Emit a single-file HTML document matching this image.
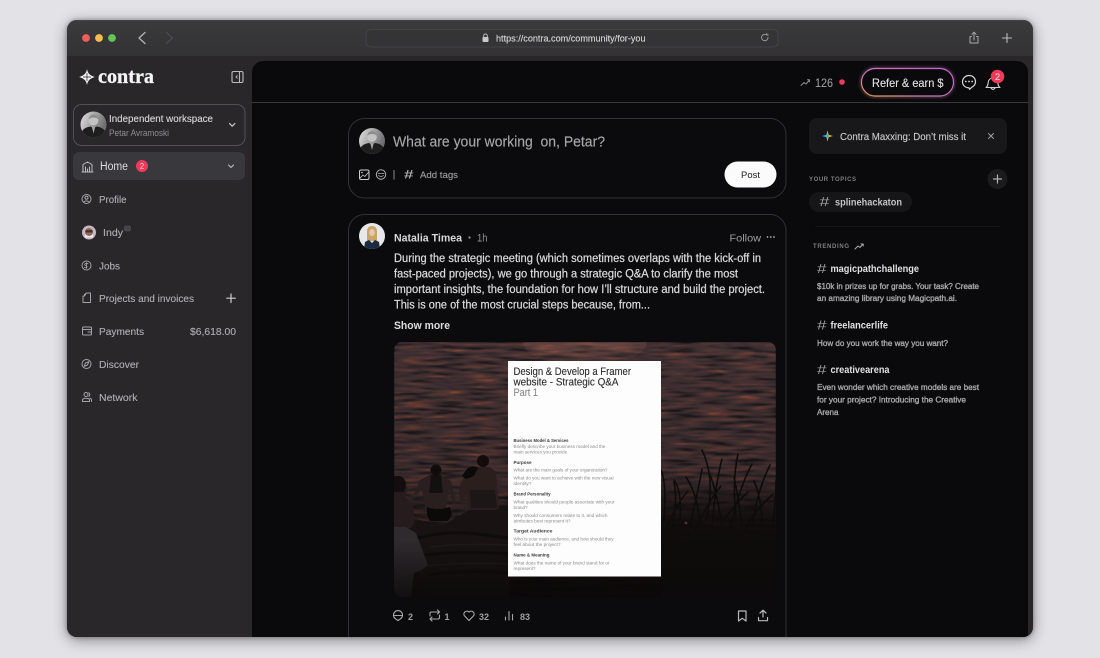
<!DOCTYPE html>
<html lang="en"><head><meta charset="utf-8"><title>Contra community</title>
<style>
html,body{margin:0;padding:0;width:1100px;height:658px;overflow:hidden;background:#e3e2e6}
#win{position:absolute;left:67px;top:20px;width:966px;height:617px;border-radius:10px;background:#29272a;box-shadow:0 3px 14px rgba(0,0,0,.42),0 0 4px rgba(0,0,0,.3)}
svg{position:absolute;left:0;top:0;display:block;filter:blur(.35px)}
text{font-family:"Liberation Sans",sans-serif;font-size:10.5px;white-space:pre}
.i{fill:none;stroke:#a5a3a7;stroke-width:1;stroke-linecap:round;stroke-linejoin:round}
.w{fill:none;stroke:#cfcfcf;stroke-width:1.2;stroke-linecap:round;stroke-linejoin:round}
.nav{fill:#b0aeb2;font-size:10.5px;stroke:#b0aeb2;stroke-width:.12}
.h{fill:#e2e2e2;font-weight:bold;font-size:10px}
.d{fill:#a8a8aa;font-size:8.7px;stroke:#a8a8aa;stroke-width:.35}
.b{fill:#dadada;font-size:11.5px;stroke:#dadada;stroke-width:.22}
.a{fill:#a0a0a3;font-size:9px;font-weight:bold}
.t{fill:#2a2a2a;font-size:11px;stroke:#2a2a2a;stroke-width:.12}
.st{fill:#3a3a3c;font-size:4.4px;font-weight:bold}
.sd{fill:#8b8b90;font-size:4.4px}
</style></head><body>
<div id="win"></div>
<svg width="1100" height="658" viewBox="0 0 1100 658" xmlns="http://www.w3.org/2000/svg">
<defs>
<clipPath id="wc"><rect x="67" y="20" width="966" height="617" rx="10"/></clipPath>
<clipPath id="pc"><rect x="394" y="342" width="382" height="255" rx="8"/></clipPath>
<clipPath id="c1"><circle cx="0" cy="0" r="13"/></clipPath>
<linearGradient id="tb" x1="0" y1="0" x2="0" y2="1"><stop offset="0" stop-color="#3b3a3d"/><stop offset="1" stop-color="#323134"/></linearGradient>
<linearGradient id="pill" x1="0" y1="1" x2="1" y2="0"><stop offset="0" stop-color="#e8a25c"/><stop offset=".35" stop-color="#c77ab0"/><stop offset="1" stop-color="#c964c8"/></linearGradient>
<linearGradient id="dk" x1="0" y1="0" x2="0" y2="1"><stop offset="0" stop-color="#000" stop-opacity="0"/><stop offset=".5" stop-color="#000" stop-opacity=".12"/><stop offset=".72" stop-color="#000" stop-opacity=".4"/><stop offset="1" stop-color="#000" stop-opacity=".85"/></linearGradient>
<linearGradient id="btm" x1="0" y1="0" x2="0" y2="1"><stop offset="0" stop-color="#0a0808" stop-opacity="0"/><stop offset="1" stop-color="#0a0808" stop-opacity=".8"/></linearGradient>
<radialGradient id="gl" cx=".5" cy="0" r="1"><stop offset="0" stop-color="#ff9c78" stop-opacity=".6"/><stop offset=".6" stop-color="#d06c50" stop-opacity=".2"/><stop offset="1" stop-color="#d06c50" stop-opacity="0"/></radialGradient>
<linearGradient id="gr" x1="0" y1="0" x2="0" y2="1"><stop offset="0" stop-color="#0e0b0b" stop-opacity="0"/><stop offset=".35" stop-color="#0e0b0b" stop-opacity=".85"/><stop offset=".55" stop-color="#0e0b0b"/><stop offset="1" stop-color="#0c0a0a"/></linearGradient>
<linearGradient id="pa" x1="0" y1="0" x2="1" y2=".4"><stop offset="0" stop-color="#e4e4e4"/><stop offset="1" stop-color="#6d6d6d"/></linearGradient>
<filter id="water" x="0" y="0" width="100%" height="100%" color-interpolation-filters="sRGB">
<feTurbulence type="fractalNoise" baseFrequency="0.03 0.32" numOctaves="3" seed="7"/>
<feColorMatrix values="1.5 0 0 0 -.25 1.5 0 0 0 -.25 1.5 0 0 0 -.25 0 0 0 0 1"/>
<feComponentTransfer>
<feFuncR type="table" tableValues=".08 .12 .20 .26 .30 .40 .58"/>
<feFuncG type="table" tableValues=".07 .10 .16 .19 .21 .23 .30"/>
<feFuncB type="table" tableValues=".09 .11 .17 .20 .20 .20 .23"/>
</feComponentTransfer>
<feGaussianBlur stdDeviation=".4"/>
</filter>
<filter id="glow" x="-20%" y="-50%" width="140%" height="200%" color-interpolation-filters="sRGB"><feGaussianBlur stdDeviation="1.5"/></filter>
<g id="av1" clip-path="url(#c1)">
<rect x="-13" y="-13" width="26" height="26" fill="url(#pa)"/>
<circle cx="0" cy="-4" r="4.800" fill="#c4c4c4"/>
<path d="M-4.800 -5q1-5 5-5t4.800 5q-2-2-5-2t-4.800 2z" fill="#8d8d8d"/>
<path d="M-11 13V6q3-3.500 8-4l3 2 3-2q6 .5 9 5v6z" fill="#1e1e1e"/>
<path d="M-1.500 3l1.500 6 1.500-6z" fill="#a8a8a8"/>
</g>
</defs>

<g clip-path="url(#wc)">
<rect x="67" y="20" width="966" height="36" fill="url(#tb)"/>
<rect x="67" y="20" width="966" height="1" fill="#454447"/>
<rect x="67" y="56" width="966" height="581" fill="#29272a"/>
<rect x="252" y="61" width="776" height="590" rx="11" fill="#0a090b"/>
<rect x="252" y="102" width="776" height="1" fill="#38373a"/>
</g>

<!-- traffic / toolbar -->
<circle cx="86" cy="38" r="3.9" fill="#ed5f5a"/><circle cx="99" cy="38" r="3.9" fill="#f5bd4f"/><circle cx="112" cy="38" r="3.9" fill="#62c554"/>
<path class="w" style="stroke:#b4b4b4;stroke-width:1.300" d="M145 32.500l-6 5.500 6 5.500"/>
<path class="w" style="stroke:#4b4a4d;stroke-width:1.300" d="M166.500 32.500l6 5.500-6 5.500"/>
<rect x="366" y="29.500" width="412" height="17.500" rx="5" fill="#343336" stroke="#434245"/>
<rect x="482.500" y="37" width="6" height="5" rx="1" fill="#c8c8c8"/><path d="M483.700 37v-1.300a1.800 1.800 0 0 1 3.600 0V37" fill="none" stroke="#c8c8c8" stroke-width=".9"/>
<text x="496" y="41.500" textLength="149.500" lengthAdjust="spacingAndGlyphs" fill="#d4d4d4" stroke="#d4d4d4" stroke-width=".15" style="font-size:9.5px">https://contra.com/community/for-you</text>
<path class="i" style="stroke:#a0a0a0;stroke-width:.9" d="M768 37.500a3.200 3.200 0 1 1-1.200-2.500M766.800 33.500v1.500h1.500"/>
<path class="w" style="stroke:#a8a8a8;stroke-width:1" d="M971.500 36.500h-1.500v6.500h8v-6.500h-1.500M974 40v-7.500M972 34.200l2-2 2 2"/>
<path class="w" style="stroke:#bcbcbc;stroke-width:1.100" d="M1007 33.500v9M1002.500 38h9"/>

<!-- sidebar -->
<path fill="#f2f2f2" d="M87 69c.8 4 2 6 7.800 8-5.800 2-7 4-7.800 8-.8-4-2-6-7.800-8 5.800-2 7-4 7.800-8z"/>
<path fill="#f2f2f2" d="M87 72.500l4 4.500-4 4.500-4-4.500z"/>
<path fill="none" stroke="#29272a" stroke-width=".7" d="M87 73v8M83 77h8"/>
<text x="98" y="83" textLength="56" lengthAdjust="spacingAndGlyphs" fill="#f4f4f4" stroke="#f4f4f4" stroke-width=".3" style="font-family:'Liberation Serif',serif;font-size:21px;font-weight:bold">contra</text>
<rect x="232" y="71.500" width="11" height="11" rx="1.500" fill="none" stroke="#bdbdbd" stroke-width="1.100"/><path d="M239.500 71.500v11" stroke="#bdbdbd" stroke-width="1.100"/><path d="M237.500 75.500l-1.500 1.500 1.500 1.500" fill="none" stroke="#bdbdbd" stroke-width=".9"/>

<rect x="73.500" y="104.500" width="171.500" height="41" rx="8" fill="#29272a" stroke="#525055"/>
<use href="#av1" transform="translate(93.500 124.500)"/>
<text x="109" y="122" textLength="104" lengthAdjust="spacingAndGlyphs" fill="#d8d8d8" stroke="#d8d8d8" stroke-width=".12" style="font-size:10.5px">Independent workspace</text>
<text x="109" y="136" textLength="60" lengthAdjust="spacingAndGlyphs" fill="#8f8d90" style="font-size:9px">Petar Avramoski</text>
<path class="w" d="M229.500 123.500l2.700 2.700 2.700-2.700"/>

<rect x="73" y="152" width="172" height="28" rx="6" fill="#39383c"/>
<path class="i" style="stroke:#bdbdbd" d="M83 172v-7.500l4.500-2.500 4.500 2.500v7.500zM85.500 172v-5M89.500 172v-5M87.500 172v-3M82 172h11"/>
<text x="100" y="170" textLength="28" lengthAdjust="spacingAndGlyphs" fill="#dcdcdc" style="font-size:11.5px">Home</text>
<circle cx="142" cy="166" r="6" fill="#ee3a5b"/><text x="142" y="168.800" text-anchor="middle" fill="#ffc9d2" style="font-size:8px">2</text>
<path class="w" style="stroke:#b8b8b8" d="M228.500 165l2.500 2.500 2.500-2.500"/>

<circle cx="86.500" cy="199" r="4.500" class="i"/><circle cx="86.500" cy="197.700" r="1.500" class="i"/><path class="i" d="M83.500 202.300q3-2.800 6 0"/>
<text class="nav" x="99" y="203" textLength="27.500" lengthAdjust="spacingAndGlyphs">Profile</text>

<circle cx="89" cy="232.500" r="7" fill="#c9b7c4"/><circle cx="89" cy="232" r="4" fill="#8c6a58"/><path d="M85 234q4 4 8 0v3.500h-8z" fill="#eeeeee"/><rect x="85.500" y="230.200" width="7" height="2.200" fill="#3e3230"/>
<text class="nav" x="103" y="236" textLength="20" lengthAdjust="spacingAndGlyphs">Indy</text>
<rect x="124.500" y="226" width="6" height="5" rx="1" fill="#444346" stroke="#5a595c" stroke-width=".5"/>

<circle cx="86.500" cy="265.500" r="4.500" class="i"/><path class="i" style="stroke-width:.8" d="M88 263.800q-1.500-1-2.800 0t.6 1.700 1 1.800-2.300 0M86.500 262.500v6"/>
<text class="nav" x="99" y="269.500" textLength="21" lengthAdjust="spacingAndGlyphs">Jobs</text>

<path class="i" d="M84.500 294.500v1.500h-1.500v6.500h7.500v-9.500h-4z M84.500 296l1.500-2.500"/>
<text class="nav" x="99" y="302" textLength="95" lengthAdjust="spacingAndGlyphs">Projects and invoices</text>
<path class="w" style="stroke:#cfcfcf" d="M231 294v8.500M226.800 298.200h8.500"/>

<rect x="82.500" y="327" width="9" height="8" rx="1" class="i"/><path class="i" d="M82.500 329.500h9M88 332h3.500"/>
<text class="nav" x="99" y="335" textLength="45" lengthAdjust="spacingAndGlyphs">Payments</text>
<text class="nav" x="190" y="335" textLength="46" lengthAdjust="spacingAndGlyphs">$6,618.00</text>

<circle cx="86.500" cy="364" r="4.500" class="i"/><path class="i" d="M88.800 361.700l-1.300 3.300-3.300 1.300 1.300-3.300z"/>
<text class="nav" x="99" y="368" textLength="40" lengthAdjust="spacingAndGlyphs">Discover</text>

<circle cx="86" cy="394.500" r="2" class="i"/><path class="i" d="M82.500 401.500v-1.300q0-2 3.500-2t3.500 2v1.300zM88.800 392.800a2 2 0 0 1 0 3.500M91.500 401.500v-1.300q0-1.500-1.500-2"/>
<text class="nav" x="99" y="401" textLength="38.500" lengthAdjust="spacingAndGlyphs">Network</text>

<!-- topbar -->
<path class="i" style="stroke:#8f8f8f" d="M801 85.500l3-3 2 1.500 3.500-4M807.500 79.700h2v2"/>
<text x="815" y="87" textLength="18" lengthAdjust="spacingAndGlyphs" fill="#a4a4a4" style="font-size:12px">126</text>
<circle cx="842" cy="82" r="2.800" fill="#ee3a5b"/>
<rect x="861.500" y="68.500" width="92" height="27.500" rx="13.700" fill="none" stroke="url(#pill)" stroke-width="2.500" filter="url(#glow)" opacity=".5"/>
<rect x="861.500" y="68.500" width="92" height="27.500" rx="13.700" fill="#0a090b" stroke="url(#pill)" stroke-width="1.200"/>
<text x="872" y="87" textLength="71.500" lengthAdjust="spacingAndGlyphs" fill="#e4e4e4" stroke="#e4e4e4" stroke-width=".12" style="font-size:12px">Refer &amp; earn $</text>
<path class="w" style="stroke:#d8d8d8" d="M969 87.800c-4 0-6.500-2.800-6.500-6s2.700-6.300 6.500-6.300 6.500 2.700 6.500 6.300c0 2.600-1.700 4.400-3.500 5.300l-2.500 2.200z"/>
<circle cx="965.800" cy="81.500" r=".9" fill="#d8d8d8"/><circle cx="969" cy="81.500" r=".9" fill="#d8d8d8"/><circle cx="972.200" cy="81.500" r=".9" fill="#d8d8d8"/>
<path class="w" style="stroke:#d0d0d0;stroke-width:1.100" d="M986 87.500c1.800-1.500 2-2.800 2.200-5 .3-3 2.300-4.500 4.800-4.500s4.500 1.500 4.800 4.500c.2 2.200.4 3.500 2.200 5zM991 88q2 2.800 4 0"/>
<circle cx="997.500" cy="76.500" r="6.800" fill="#ee3a5b"/><text x="997.500" y="79.800" text-anchor="middle" fill="#ffd7de" style="font-size:9.5px">2</text>

<!-- compose -->
<rect x="348.500" y="118.500" width="437.500" height="79.500" rx="16" fill="#0b0a0d" stroke="#323135"/>
<use href="#av1" transform="translate(372 141)"/>
<text x="393" y="146.500" textLength="212" lengthAdjust="spacingAndGlyphs" fill="#a7a7aa" stroke="#a7a7aa" stroke-width=".15" style="font-size:14.5px">What are your working  on, Petar?</text>
<rect x="359.500" y="170" width="9.500" height="9.500" rx="1.500" class="w" style="stroke-width:1"/><path class="w" style="stroke-width:.8" d="M360 178l3-3 1.800 1.500 3.500-4"/><circle cx="362" cy="172.500" r=".8" fill="#cfcfcf"/>
<circle cx="381" cy="174.500" r="4.700" class="i" style="stroke:#b0b0b0"/><path class="i" style="stroke:#b0b0b0;stroke-width:.8" d="M378 173.500h6M378.500 175.500q2.500 2 5 0"/>
<path d="M394 170v9.500" stroke="#8a8a8a"/>
<text x="404" y="178.500" textLength="9.500" lengthAdjust="spacingAndGlyphs" fill="#a8a8a8" style="font-size:12px;font-weight:bold">#</text>
<text x="420" y="178" textLength="38" lengthAdjust="spacingAndGlyphs" fill="#9a9a9a" stroke="#9a9a9a" stroke-width=".15" style="font-size:9.5px">Add tags</text>
<rect x="724.500" y="161.500" width="52" height="26" rx="13" fill="#fbfbfb"/>
<text x="741" y="178" textLength="19" lengthAdjust="spacingAndGlyphs" fill="#222" style="font-size:9.5px">Post</text>

<!-- post card -->
<g clip-path="url(#wc)"><rect x="348.500" y="214.500" width="437.500" height="470" rx="16" fill="#0b0a0d" stroke="#323135"/></g>
<g transform="translate(372 236)"><g clip-path="url(#c1)">
<rect x="-13" y="-13" width="26" height="26" fill="#e8e8ea"/>
<path d="M-5 5V-4q0-6 5-6t5 6V5z" fill="#c9a468"/>
<ellipse cx="0" cy="-3.500" rx="2.800" ry="3.500" fill="#e8c7ac"/>
<path d="M-8 13l1-7 4-2 3 3 3-3 4 2 1 7z" fill="#1b2a40"/>
</g></g>
<text x="394" y="241.500" textLength="68" lengthAdjust="spacingAndGlyphs" fill="#d8d8d8" style="font-size:11px;font-weight:bold">Natalia Timea</text>
<circle cx="469.500" cy="237.500" r="1.100" fill="#999"/>
<text x="477" y="241.500" textLength="10.500" lengthAdjust="spacingAndGlyphs" fill="#949494" style="font-size:11px">1h</text>
<text x="729.500" y="241.500" textLength="31.500" lengthAdjust="spacingAndGlyphs" fill="#9f9f9f" style="font-size:10.5px">Follow</text>
<circle cx="767.500" cy="237" r=".9" fill="#b0b0b0"/><circle cx="770.800" cy="237" r=".9" fill="#b0b0b0"/><circle cx="774" cy="237" r=".9" fill="#b0b0b0"/>
<text class="b" x="394" y="262" textLength="367" lengthAdjust="spacingAndGlyphs">During the strategic meeting (which sometimes overlaps with the kick-off in</text>
<text class="b" x="394" y="277.500" textLength="344" lengthAdjust="spacingAndGlyphs">fast-paced projects), we go through a strategic Q&amp;A to clarify the most</text>
<text class="b" x="394" y="293" textLength="371" lengthAdjust="spacingAndGlyphs">important insights, the foundation for how I’ll structure and build the project.</text>
<text class="b" x="394" y="308.500" textLength="256" lengthAdjust="spacingAndGlyphs">This is one of the most crucial steps because, from...</text>
<text x="394" y="329" textLength="56" lengthAdjust="spacingAndGlyphs" fill="#dedede" style="font-size:11px;font-weight:bold">Show more</text>

<!-- photo -->
<g clip-path="url(#pc)">
<rect x="394" y="342" width="382" height="255" fill="#3b3033" filter="url(#water)"/>
<rect x="394" y="342" width="382" height="255" fill="url(#dk)"/>
<ellipse cx="585" cy="342" rx="62" ry="24" fill="url(#gl)" style="mix-blend-mode:screen"/>
<!-- rocks -->
<path d="M394 525l20-6 30 6 30-18 35-2v92H394z" fill="#181312"/>
<path d="M418 538q30-8 60-4t32 4M420 556q35-6 90-2M428 575q40-6 82-2" fill="none" stroke="#0f0c0c" stroke-width="3"/>
<path d="M430 547q30-4 78-2M425 566q40-4 84-2" fill="none" stroke="#211a19" stroke-width="1.500"/>
<!-- woman -->
<path d="M431 473h10l2 4 8 4 5 22-3 1-4-16-2 15-2 9-18 0-3-10-2-14-5 7-3-1 6-14 8-4z" fill="#2a1f1f"/>
<path d="M427 507q10 4 23 0l2 8-4 6h-18l-3-6z" fill="#0c0909"/>
<path d="M431 475h10l2 18h-14z" fill="#151010"/>
<circle cx="436" cy="470" r="5.500" fill="#110c0c"/>
<!-- man -->
<path d="M476 467h14l6 5 3 36-4 2-26 0-3-16-3 8-3-1-1-14 8-15z" fill="#2b1f1e"/>
<path d="M466 470q6-6 12-2l-4 8-8 3-4-3z" fill="#0c0909"/>
<path d="M470 490h25l2 18h-26z" fill="#1d1617"/>
<circle cx="483" cy="461" r="6" fill="#120d0c"/>
<!-- left person -->
<path d="M394 480h6q7 1 7 10l-2 7 8 7 2 18-4 6h-17z" fill="#261b1d"/>
<path d="M394 476h6q6 2 6 10l-2 6h-10z" fill="#120e0f"/>
<!-- shirt person -->
<path d="M394 527l12 0 10 6 12 32-10 8-4 24h-20z" fill="#2e2a2e"/>
<path d="M414 573l5-2 10 26h-18z" fill="#151010"/>
<rect x="394" y="540" width="382" height="57" fill="url(#btm)"/>
<!-- grass -->
<rect x="661" y="480" width="115" height="117" fill="url(#gr)"/>
<g fill="none" stroke="#0e0c0b" stroke-width="1.600" stroke-linecap="round">
<path d="M664 520q3-40-4-52M672 530q6-30 2-48M680 520q2-30-6-40M690 525q8-34 12-56M700 525q-2-30-14-48M712 525q4-44 10-66M722 525q-6-36-12-50M730 530q8-40 22-66M742 525q-4-30-8-48M752 525q6-36 18-60M762 525q0-26-8-44M772 530q4-30 4-50M706 520q10-40-4-70M736 520q-4-40 2-66M668 525q8-20 20-34M695 530q14-30 26-44M718 530q14-24 30-38M745 530q10-20 28-36"/>
</g>
<circle cx="686" cy="523" r="1.300" fill="#6a2f2a"/>
</g>
<!-- document -->
<rect x="508" y="361" width="153" height="215.500" fill="#fdfdfd"/>
<text class="t" x="513.500" y="375" textLength="117.500" lengthAdjust="spacingAndGlyphs">Design &amp; Develop a Framer</text>
<text class="t" x="513.500" y="385.500" textLength="105" lengthAdjust="spacingAndGlyphs">website - Strategic Q&amp;A</text>
<text class="t" x="513.500" y="396" textLength="24.500" lengthAdjust="spacingAndGlyphs" style="fill:#8b8b8b;stroke:#8b8b8b">Part 1</text>
<text class="st" x="513.500" y="442" textLength="55" lengthAdjust="spacingAndGlyphs">Business Model &amp; Services</text>
<text class="sd" x="513.500" y="447.800" textLength="92" lengthAdjust="spacingAndGlyphs">Briefly describe your business model and the</text>
<text class="sd" x="513.500" y="453.300" textLength="55" lengthAdjust="spacingAndGlyphs">main services you provide.</text>
<text class="st" x="513.500" y="464" textLength="18" lengthAdjust="spacingAndGlyphs">Purpose</text>
<text class="sd" x="513.500" y="471.700" textLength="94" lengthAdjust="spacingAndGlyphs">What are the main goals of your organization?</text>
<text class="sd" x="513.500" y="479.700" textLength="100" lengthAdjust="spacingAndGlyphs">What do you want to achieve with the new visual</text>
<text class="sd" x="513.500" y="485.200" textLength="18" lengthAdjust="spacingAndGlyphs">identity?</text>
<text class="st" x="513.500" y="495.300" textLength="37" lengthAdjust="spacingAndGlyphs">Brand Personality</text>
<text class="sd" x="513.500" y="503.300" textLength="101" lengthAdjust="spacingAndGlyphs">What qualities should people associate with your</text>
<text class="sd" x="513.500" y="508.800" textLength="14" lengthAdjust="spacingAndGlyphs">brand?</text>
<text class="sd" x="513.500" y="517" textLength="94" lengthAdjust="spacingAndGlyphs">Why should consumers relate to it, and which</text>
<text class="sd" x="513.500" y="522.500" textLength="57" lengthAdjust="spacingAndGlyphs">attributes best represent it?</text>
<text class="st" x="513.500" y="532.500" textLength="39" lengthAdjust="spacingAndGlyphs">Target Audience</text>
<text class="sd" x="513.500" y="540.500" textLength="100" lengthAdjust="spacingAndGlyphs">Who is your main audience, and how should they</text>
<text class="sd" x="513.500" y="546" textLength="47" lengthAdjust="spacingAndGlyphs">feel about the project?</text>
<text class="st" x="513.500" y="556.500" textLength="36" lengthAdjust="spacingAndGlyphs">Name &amp; Meaning</text>
<text class="sd" x="513.500" y="564.500" textLength="96" lengthAdjust="spacingAndGlyphs">What does the name of your brand stand for or</text>
<text class="sd" x="513.500" y="570" textLength="22" lengthAdjust="spacingAndGlyphs">represent?</text>

<!-- actions -->
<path class="i" style="stroke:#a8a8a8;stroke-width:1.100" d="M398 620.500l-2.500-1.700a4.500 4.500 0 1 1 5 0zM394.200 615.500h7.600"/>
<text class="a" x="408" y="620" textLength="5">2</text>
<path class="i" style="stroke:#a8a8a8;stroke-width:1.100" d="M430 616v-2.500q0-1.500 1.500-1.500h7.500M437.500 610l2 2-2 2M439.500 615v2.500q0 1.500-1.500 1.500h-7.500M432 617l-2 2 2 2"/>
<text class="a" x="444.500" y="620" textLength="3">1</text>
<path class="i" style="stroke:#a8a8a8;stroke-width:1.100" d="M469 620.500l-4.600-4.700a3 3 0 0 1 4.600-3.800 3 3 0 0 1 4.600 3.800z"/>
<text class="a" x="479" y="620" textLength="10" lengthAdjust="spacingAndGlyphs">32</text>
<path class="i" style="stroke:#a8a8a8;stroke-width:1.100" d="M505.500 620v-3M509 620v-8.500M512.500 620v-5.500"/>
<text class="a" x="520" y="620" textLength="10" lengthAdjust="spacingAndGlyphs">83</text>
<path class="i" style="stroke:#b8b8b8;stroke-width:1.200" d="M738.500 611h7.500v10l-3.700-2.700-3.800 2.700z"/>
<path class="i" style="stroke:#b8b8b8;stroke-width:1.200" d="M763 617v-6.500M760 613l3-2.800 3 2.800M758.500 617.500v3.200h9v-3.200"/>

<!-- right rail -->
<rect x="809" y="118" width="198" height="36" rx="8" fill="#18171a"/>
<path d="M827.500 130.500l1.200 4.300 4.300 1.200-4.300 1.200-1.200 4.300z" fill="#e6b54a"/><path d="M827.500 130.500l-1.200 4.300-4.300 1.200 4.300 1.200 1.200 4.300z" fill="#3fa5d8"/><circle cx="827.500" cy="136" r="1.400" fill="#4bbd7a"/>
<text x="840" y="140" textLength="126" lengthAdjust="spacingAndGlyphs" fill="#c8c8c8" stroke="#c8c8c8" stroke-width=".15" style="font-size:10.5px">Contra Maxxing: Don’t miss it</text>
<path class="i" style="stroke:#a0a0a0" d="M988.500 133.500l5 5M993.500 133.500l-5 5"/>
<text x="809" y="181" textLength="47" fill="#7f7f7f" style="font-size:6px;font-weight:bold">YOUR TOPICS</text>
<circle cx="997.500" cy="179" r="10" fill="#1b1a1d"/><path class="w" style="stroke:#b0b0b0" d="M997.500 175v8M993.500 179h8"/>
<rect x="809" y="192" width="103" height="20" rx="10" fill="#161518"/>
<text x="819.500" y="206" textLength="10" lengthAdjust="spacingAndGlyphs" fill="#a0a0a0" style="font-size:13px">#</text>
<text class="h" x="835" y="205.500" textLength="67" lengthAdjust="spacingAndGlyphs" style="fill:#c4c4c4">splinehackaton</text>
<rect x="815" y="226" width="185" height="1" fill="#151417"/>
<text x="813" y="248" textLength="36" fill="#7f7f7f" style="font-size:6px;font-weight:bold">TRENDING</text>
<path class="i" style="stroke:#aaa" d="M855 249l3-3 2 1.500 3-3.500M861 244h2.200v2"/>

<text x="817" y="273" textLength="9.500" lengthAdjust="spacingAndGlyphs" fill="#a0a0a0" style="font-size:13px">#</text>
<text class="h" x="830.500" y="272" textLength="88.500" lengthAdjust="spacingAndGlyphs">magicpathchallenge</text>
<text class="d" x="817" y="289" textLength="162" lengthAdjust="spacingAndGlyphs">$10k in prizes up for grabs. Your task? Create</text>
<text class="d" x="817" y="301" textLength="140" lengthAdjust="spacingAndGlyphs">an amazing library using Magicpath.ai.</text>
<text x="817" y="329.500" textLength="9.500" lengthAdjust="spacingAndGlyphs" fill="#a0a0a0" style="font-size:13px">#</text>
<text class="h" x="830.500" y="328.500" textLength="57.500" lengthAdjust="spacingAndGlyphs">freelancerlife</text>
<text class="d" x="817" y="346" textLength="131" lengthAdjust="spacingAndGlyphs">How do you work the way you want?</text>
<text x="817" y="374" textLength="9.500" lengthAdjust="spacingAndGlyphs" fill="#a0a0a0" style="font-size:13px">#</text>
<text class="h" x="830.500" y="373" textLength="59" lengthAdjust="spacingAndGlyphs">creativearena</text>
<text class="d" x="817" y="390" textLength="162" lengthAdjust="spacingAndGlyphs">Even wonder which creative models are best</text>
<text class="d" x="817" y="402.500" textLength="149" lengthAdjust="spacingAndGlyphs">for your project? Introducing the Creative</text>
<text class="d" x="817" y="415" textLength="21.500" lengthAdjust="spacingAndGlyphs">Arena</text>
</svg>
</body></html>
